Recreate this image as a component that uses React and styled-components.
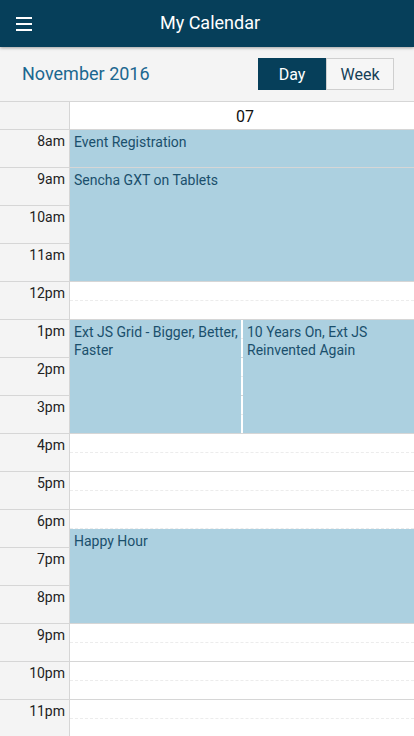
import React from 'react';
import styled, { createGlobalStyle } from 'styled-components';

const GlobalStyle = createGlobalStyle`
  html, body {
    margin: 0;
    padding: 0;
    background: #ffffff;
    font-family: Roboto, "Liberation Sans", sans-serif;
    overflow: hidden;
  }
  * { box-sizing: border-box; }
`;

const HOUR = 38;

const Page = styled.div`
  width: 414px;
  height: 736px;
  display: flex;
  flex-direction: column;
  overflow: hidden;
`;

const TitleBar = styled.div`
  height: 47px;
  flex-shrink: 0;
  background: #063f5a;
  display: flex;
  align-items: center;
  position: relative;
  z-index: 2;
  box-shadow: 0 1px 3px rgba(0, 0, 0, 0.35);
`;

const MenuButton = styled.div`
  width: 48px;
  height: 47px;
  display: flex;
  flex-direction: column;
  justify-content: center;
  gap: 4px;
  padding-left: 16px;
  span {
    display: block;
    width: 16px;
    height: 2px;
    background: #ffffff;
  }
`;

const Title = styled.div`
  flex: 1;
  text-align: center;
  color: #ffffff;
  font-size: 18px;
  margin-right: 42px;
  padding-bottom: 2px;
`;

const Toolbar = styled.div`
  height: 54px;
  flex-shrink: 0;
  background: #f4f4f4;
  display: flex;
  align-items: center;
  justify-content: space-between;
  padding: 0 20px 0 22px;
`;

const Month = styled.div`
  font-size: 18px;
  color: #1b6790;
  padding-bottom: 2px;
`;

const Segmented = styled.div`
  display: flex;
`;

const Seg = styled.div`
  width: 68px;
  height: 32px;
  display: flex;
  align-items: center;
  justify-content: center;
  font-size: 16px;
  ${({ active }) => active ? `
    background: #063f5a;
    color: #ffffff;
    border: 1px solid #063f5a;
  ` : `
    background: #f6f6f6;
    color: #153f57;
    border: 1px solid #cfcfcf;
  `}
`;

const Grid = styled.div`
  flex: 1;
  display: flex;
  flex-direction: column;
  border-top: 1px solid #d6d6d6;
`;

const HeadRow = styled.div`
  display: flex;
  height: 28px;
  border-bottom: 1px solid #d6d6d6;
`;

const Corner = styled.div`
  width: 70px;
  background: #f4f4f4;
  border-right: 1px solid #d6d6d6;
`;

const DayLabel = styled.div`
  flex: 1;
  display: flex;
  align-items: center;
  justify-content: center;
  font-size: 16px;
  color: #111;
  padding: 2px 0 0 6px;
`;

const Body = styled.div`
  display: flex;
`;

const TimeCol = styled.div`
  width: 70px;
  background: #f4f4f4;
  border-right: 1px solid #d6d6d6;
`;

const TimeCell = styled.div`
  height: ${HOUR}px;
  border-bottom: 1px solid #d6d6d6;
  text-align: right;
  padding: 3px 4px 0 0;
  font-size: 14px;
  color: #222;
`;

const DayCol = styled.div`
  flex: 1;
  position: relative;
`;

const Slot = styled.div`
  height: ${HOUR}px;
  border-bottom: 1px solid #d6d6d6;
  display: flex;
  flex-direction: column;
  &::before {
    content: '';
    display: block;
    height: 18px;
    border-bottom: 1px dashed #ececec;
  }
`;

const Event = styled.div`
  position: absolute;
  background: #acd0e0;
  color: #1a4f6c;
  font-size: 14px;
  line-height: 18px;
  padding: 3px 0 0 4px;
  overflow: visible;
  white-space: normal;
`;

const hours = ['8am', '9am', '10am', '11am', '12pm', '1pm', '2pm', '3pm', '4pm', '5pm', '6pm', '7pm', '8pm', '9pm', '10pm', '11pm'];

const events = [
  { title: 'Event Registration', start: 0, end: 1, col: 0, cols: 1 },
  { title: 'Sencha GXT on Tablets', start: 1, end: 4, col: 0, cols: 1 },
  { title: 'Ext JS Grid - Bigger, Better, Faster', start: 5, end: 8, col: 0, cols: 2 },
  { title: '10 Years On, Ext JS Reinvented Again', start: 5, end: 8, col: 1, cols: 2 },
  { title: 'Happy Hour', start: 10.5, end: 13, col: 0, cols: 1 },
];

export default function App() {
  return (
    <Page>
      <GlobalStyle />
      <TitleBar>
        <MenuButton><span /><span /><span /></MenuButton>
        <Title>My Calendar</Title>
      </TitleBar>
      <Toolbar>
        <Month>November 2016</Month>
        <Segmented>
          <Seg active>Day</Seg>
          <Seg>Week</Seg>
        </Segmented>
      </Toolbar>
      <Grid>
        <HeadRow>
          <Corner />
          <DayLabel>07</DayLabel>
        </HeadRow>
        <Body>
          <TimeCol>
            {hours.map(h => <TimeCell key={h}>{h}</TimeCell>)}
          </TimeCol>
          <DayCol>
            {hours.map(h => <Slot key={h} />)}
            {events.map(e => (
              <Event
                key={e.title}
                style={{
                  top: e.start * HOUR,
                  height: (e.end - e.start) * HOUR - 1,
                  left: e.cols === 2 ? (e.col === 0 ? 0 : 'calc(50% + 1px)') : 0,
                  width: e.cols === 2 ? 'calc(50% - 1px)' : '100%',
                }}
              >
                {e.title}
              </Event>
            ))}
          </DayCol>
        </Body>
      </Grid>
    </Page>
  );
}
